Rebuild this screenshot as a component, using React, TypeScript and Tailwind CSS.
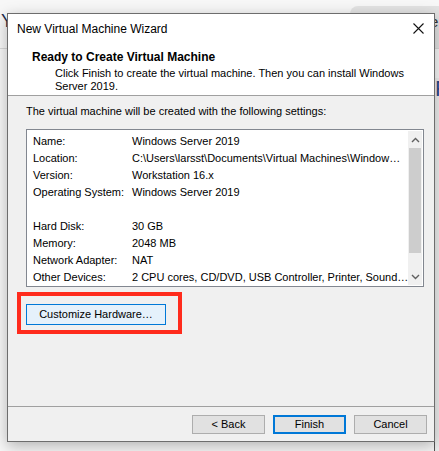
import React from 'react';

const rows: [string, string][] = [
  ['Name:', 'Windows Server 2019'],
  ['Location:', 'C:\\Users\\larsst\\Documents\\Virtual Machines\\Window…'],
  ['Version:', 'Workstation 16.x'],
  ['Operating System:', 'Windows Server 2019'],
  ['', ''],
  ['Hard Disk:', '30 GB'],
  ['Memory:', '2048 MB'],
  ['Network Adapter:', 'NAT'],
  ['Other Devices:', '2 CPU cores, CD/DVD, USB Controller, Printer, Sound…'],
];

function Chevron({ up }: { up?: boolean }) {
  return (
    <svg width="9" height="6" viewBox="0 0 9 6" className="text-[#606060]">
      <path d={up ? 'M1 5 L4.5 1.5 L8 5' : 'M1 1 L4.5 4.5 L8 1'} fill="none" stroke="currentColor" strokeWidth="1.4" />
    </svg>
  );
}

function WinButton({ label, primary }: { label: string; primary?: boolean }) {
  return (
    <button
      className={
        'h-[19px] w-[73px] bg-[#e1e1e1] text-[11px] leading-none text-black ' +
        (primary ? 'border-2 border-[#0078d7]' : 'border border-[#adadad]')
      }
    >
      {label}
    </button>
  );
}

export default function App() {
  return (
    <div
      className="relative h-[451px] w-[439px] overflow-hidden bg-[#f7f7f7]"
      style={{ fontFamily: '"Liberation Sans", Arial, sans-serif' }}
    >
      {/* page behind the dialog */}
      <div className="absolute left-0 right-0 top-[48px] h-px bg-[#d9d9d9]" />
      <div className="absolute left-[1px] top-[12px] text-[18px] leading-none text-[#1b2a4a]">Y</div>
      <div className="absolute left-[350px] top-[6px] h-[42px] w-[100px] rounded-tl-[8px] bg-[#e3e3e3]" />
      <div className="absolute left-[430px] top-[14px] text-[15px] leading-none text-[#333]">e</div>
      <div className="absolute left-[434px] top-[78px] h-[380px] w-[10px] border-l border-[#555] bg-[#eeeeee]" />
      <div className="absolute left-[435px] top-[78px] text-[22px] leading-none text-[#2a4a8a]">F</div>

      {/* dialog */}
      <div className="absolute left-[7px] top-[13px] flex h-[429px] w-[428px] flex-col border border-[#6d6d6d] bg-[#f0f0f0] shadow-[0_4px_14px_rgba(0,0,0,0.28)]">
        <div className="flex h-[29px] shrink-0 items-center justify-between bg-white pl-[9px] pr-[10px]">
          <span className="text-[12px] text-black">New Virtual Machine Wizard</span>
          <svg width="11" height="11" viewBox="0 0 11 11">
            <path d="M0.5 0.5 L10.5 10.5 M10.5 0.5 L0.5 10.5" stroke="#111" strokeWidth="1.1" />
          </svg>
        </div>
        <div className="h-[53px] shrink-0 border-b border-[#a0a0a0] bg-white pl-[24px] pt-[7px]">
          <div className="text-[12px] font-bold leading-[15px] text-black">Ready to Create Virtual Machine</div>
          <div className="mt-[2px] whitespace-nowrap pl-[23px] text-[11px] leading-[13px] text-black">
            Click Finish to create the virtual machine. Then you can install Windows
            <br />
            Server 2019.
          </div>
        </div>

        <div className="flex flex-1 flex-col pl-[18px] pr-[10px]">
          <div className="pt-[8px] text-[11px] leading-[14px] text-black">
            The virtual machine will be created with the following settings:
          </div>
          <div className="mt-[11px] flex h-[158px] border border-[#828790] bg-white">
            <div className="flex-1 pl-[6px] pt-[3px]">
              {rows.map(([k, v], i) => (
                <div key={i} className="flex h-[17px] items-center whitespace-nowrap text-[11px] text-black">
                  <span className="w-[99px] shrink-0">{k}</span>
                  <span>{v}</span>
                </div>
              ))}
            </div>
            <div className="my-[1px] mr-[1px] flex w-[16px] flex-col bg-[#f0f0f0]">
              <div className="flex h-[17px] items-center justify-center">
                <Chevron up />
              </div>
              <div className="mx-[1px] h-[105px] bg-[#cdcdcd]" />
              <div className="flex-1" />
              <div className="flex h-[17px] items-center justify-center">
                <Chevron />
              </div>
            </div>
          </div>

          <div className="-ml-[9px] mt-[5px] w-[165px] border-4 border-[#ff2b1c] p-[5px]">
            <button className="h-[21px] w-[140px] border border-[#0078d7] bg-[#e5f1fb] text-[11px] leading-none text-black">
              Customize Hardware…
            </button>
          </div>
        </div>

        <div className="flex h-[35px] shrink-0 items-start justify-end gap-[8px] border-t border-[#a0a0a0] pr-[7px] pt-[8px]">
          <WinButton label="< Back" />
          <WinButton label="Finish" primary />
          <WinButton label="Cancel" />
        </div>
      </div>
    </div>
  );
}
